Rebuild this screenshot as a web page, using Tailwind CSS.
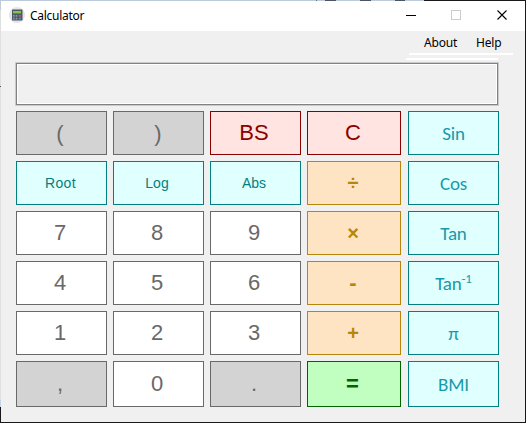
<!DOCTYPE html>
<html lang="en">
<head>
<meta charset="utf-8">
<title>Calculator</title>
<script src="https://cdn.jsdelivr.net/npm/@tailwindcss/browser@4"></script>
</head>
<body class="w-[526px] h-[423px] overflow-hidden relative bg-[#18181b] font-['Liberation_Sans',Arial,sans-serif]">
<!-- desktop strip visible around the window -->
<div class="absolute left-0 top-0 h-px w-[424px] bg-[#bccbdc]"></div>
<div class="absolute left-[316px] top-0 flex gap-[17px]">
  <i class="block h-px w-[18px] border-l border-[#65738a]"></i>
</div>
<div class="absolute left-[325px] top-0 flex gap-[24px]">
  <i class="block h-px w-[11px] bg-[#4d5267]"></i><i class="block h-px w-[11px] bg-[#4d5267]"></i><i class="block h-px w-[10px] bg-[#4d5267]"></i>
</div>
<div class="absolute left-0 top-0 w-px h-[407px] bg-[#dfdfdf]"></div>
<div class="absolute left-0 top-0 w-px h-[10px] bg-[#bccbdc]"></div>
<div class="absolute left-0 top-[86px] w-px h-px bg-[#555]"></div>
<div class="absolute left-0 top-[400px] w-px h-[7px] bg-[#c5d5e7]"></div>

<main class="ml-px h-[423px] w-[524px] pt-px flex flex-col">
  <header class="h-[30px] shrink-0 bg-white flex items-center">
    <svg class="ml-2 -mt-[2px] size-4 shrink-0" viewBox="0 0 16 16">
      <circle cx="8" cy="8" r="8" fill="#e4e4e4"/>
      <rect x="3" y="2.500" width="10.500" height="11" rx=".6" fill="#4c5968"/>
      <rect x="4" y="4" width="8" height="2.400" fill="#83c83c"/>
      <g fill="#8996a5"><rect x="4" y="8" width="1.700" height="1.700"/><rect x="6.700" y="8" width="1.700" height="1.700"/><rect x="4" y="10.700" width="1.700" height="1.700"/><rect x="6.700" y="10.700" width="1.700" height="1.700"/></g>
      <rect x="9.800" y="8" width="2.200" height="1.700" fill="#d2525c"/><rect x="9.800" y="10.700" width="2.200" height="1.700" fill="#498bc4"/>
    </svg>
    <h1 class="ml-[5px] w-[54px] text-[12px] leading-4 tracking-[-0.27px] text-black font-['Noto_Sans',sans-serif]">Calculator</h1>
    <svg class="ml-auto w-[138px] h-[30px]" viewBox="0 0 138 30" fill="none" shape-rendering="crispEdges">
      <path d="M19 14.500H29" stroke="#000"/>
      <rect x="64.500" y="9.500" width="9" height="9" stroke="#ccc"/>
      <path d="M110.500 9.500L119.500 18.500M119.500 9.500L110.500 18.500" stroke="#000" stroke-width="1.100" shape-rendering="auto"/>
    </svg>
  </header>
  <div class="h-[391px] shrink-0 bg-[#f0f0f0] flex flex-col">
    <nav class="h-[24px] shrink-0 w-[104px] ml-[408px] pt-[2px] border-b-2 border-white flex items-center text-[12px] leading-4 text-black font-['Noto_Sans',sans-serif]">
      <span class="ml-[15px] w-[33px] whitespace-nowrap tracking-[-0.2px]">About</span>
      <span class="ml-[19px] whitespace-nowrap tracking-[-0.2px]">Help</span>
    </nav>
    <div class="mt-[3px] ml-[405px] w-[92px] h-[2px] shrink-0 bg-white"></div>
    <div class="mt-[2px] ml-[14px] w-[484px] h-[44px] shrink-0 border border-[#cacaca]">
      <div class="h-full border border-[#828282]"><div class="h-full border border-white"></div></div>
    </div>
    <div class="mt-[5px] ml-[15px] flex gap-[6px] text-[22px] leading-none text-[#696969] *:grid *:grid-rows-[repeat(5,44px)_46px] *:gap-y-[6px] [&_button]:border [&_button]:flex [&_button]:items-center [&_button]:justify-center">
      <div class="w-[91px]">
        <button class="bg-[#d3d3d3] border-[#696969] pt-px pr-[3px]">(</button>
        <button class="bg-[#e0ffff] border-[#008080] text-[#008080] text-[14px] tracking-[0.3px] pr-[2px]">Root</button>
        <button class="bg-white border-[#696969] pr-[3px]">7</button>
        <button class="bg-white border-[#696969] pr-[3px]">4</button>
        <button class="bg-white border-[#696969] pr-[3px]">1</button>
        <button class="bg-[#d3d3d3] border-[#696969] pr-[3px]">,</button>
      </div>
      <div class="w-[91px]">
        <button class="bg-[#d3d3d3] border-[#696969] pt-px pr-px">)</button>
        <button class="bg-[#e0ffff] border-[#008080] text-[#008080] text-[14px] pr-[3px]">Log</button>
        <button class="bg-white border-[#696969] pr-[3px]">8</button>
        <button class="bg-white border-[#696969] pr-[3px]">5</button>
        <button class="bg-white border-[#696969] pr-[3px]">2</button>
        <button class="bg-white border-[#696969] pr-[3px]">0</button>
      </div>
      <div class="w-[91px]">
        <button class="bg-[#ffe4e1] border-[#8b0000] text-[#8b0000] pr-[3px]">BS</button>
        <button class="bg-[#e0ffff] border-[#008080] text-[#008080] text-[14px] pr-[3px]">Abs</button>
        <button class="bg-white border-[#696969] pr-[3px]">9</button>
        <button class="bg-white border-[#696969] pr-[3px]">6</button>
        <button class="bg-white border-[#696969] pr-[3px]">3</button>
        <button class="bg-[#d3d3d3] border-[#696969] pr-[3px]">.</button>
      </div>
      <div class="w-[94px]">
        <button class="bg-[#ffe4e1] border-[#8b0000] text-[#8b0000] pr-[2px]">C</button>
        <button class="bg-[#ffe4c4] border-[#b8860b] text-[#b8860b] font-bold text-[20px] pr-[2px]">÷</button>
        <button class="bg-[#ffe4c4] border-[#b8860b] text-[#b8860b] font-bold text-[20px] pr-[2px]">×</button>
        <button class="bg-[#ffe4c4] border-[#b8860b] text-[#b8860b] font-bold pr-[2px]">-</button>
        <button class="bg-[#ffe4c4] border-[#b8860b] text-[#b8860b] font-bold text-[20px] pr-[2px]">+</button>
        <button class="bg-[#c1ffc1] border-[#006400] text-[#006400] font-bold pr-[3px]">=</button>
      </div>
      <div class="w-[91px] ml-px text-[#1899ab] font-['Carlito','Lato',sans-serif] text-[19px] tracking-[-0.2px] [&_button]:bg-[#e0ffff] [&_button]:border-[#008080] [&_button]:pt-px">
        <button>Sin</button>
        <button>Cos</button>
        <button>Tan</button>
        <button>Tan<span class="text-[13px] -translate-y-[5px]">-1</span></button>
        <button>π</button>
        <button>BMI</button>
      </div>
    </div>
  </div>
</main>
</body>
</html>
